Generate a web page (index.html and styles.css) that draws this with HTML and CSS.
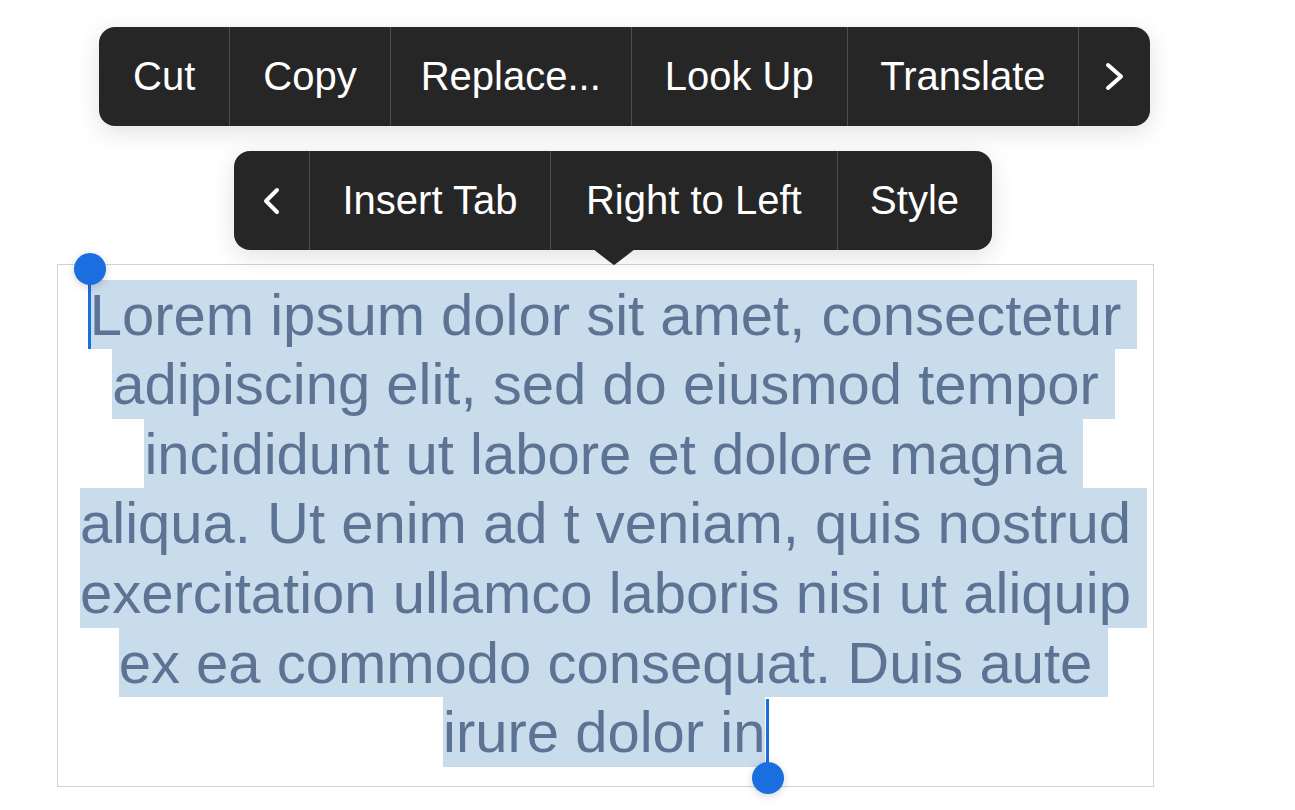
FILE: index.html
```html
<!DOCTYPE html>
<html>
<head>
<title>Text Selection Menu</title>
<link rel="stylesheet" href="styles.css">
</head>
<body>

<div class="stage">
  <div class="menu menu-main">
    <span class="item item-cut">Cut</span>
    <span class="item">Copy</span>
    <span class="item item-replace">Replace...</span>
    <span class="item">Look Up</span>
    <span class="item item-translate">Translate</span>
    <span class="item item-icon">
      <svg width="19" height="29" viewBox="0 0 19 29"><path d="M3 3 L16 14.5 L3 26" fill="none" stroke="#fff" stroke-width="4" stroke-linecap="round" stroke-linejoin="round"/></svg>
    </span>
  </div>

  <div class="menu menu-more">
    <span class="item item-icon item-back">
      <svg width="17" height="28" viewBox="0 0 17 28"><path d="M14 3 L3 14 L14 25" fill="none" stroke="#fff" stroke-width="4" stroke-linecap="round" stroke-linejoin="round"/></svg>
    </span>
    <span class="item item-tab">Insert Tab</span>
    <span class="item item-rtl">Right to Left</span>
    <span class="item item-style">Style</span>
  </div>

  <div class="textbox">
    <p class="text"><span class="caret caret-start"></span><span class="sel">Lorem ipsum dolor sit amet, consectetur adipiscing elit, sed do eiusmod tempor incididunt ut labore et dolore magna aliqua. Ut enim ad t veniam, quis nostrud exercitation ullamco laboris nisi ut aliquip ex ea commodo consequat. Duis aute irure dolor in</span><span class="caret caret-end"></span></p>
  </div>
</div>

</body>
</html>
```

FILE: styles.css
```css
body {
  margin: 0;
  background: #fff;
  font-family: "Liberation Sans", Arial, sans-serif;
}
.stage {
  display: flex;
  flex-direction: column;
  align-items: flex-start;
  min-height: 810px;
  box-sizing: border-box;
  padding-top: 27px;
}

/* edit menus */
.menu {
  display: flex;
  height: 99px;
  background: #262626;
  border-radius: 16px;
  box-shadow: 0 6px 24px rgba(0, 0, 0, 0.12);
  color: #fff;
  font-size: 40px;
}
.menu-main {
  margin-left: 99px;
}
.menu-more {
  position: relative;
  z-index: 2;
  margin-top: 25px;
  margin-left: 234px;
}
.menu-more::after {
  content: "";
  position: absolute;
  left: 359px;
  bottom: -15px;
  width: 42px;
  height: 16px;
  background: #262626;
  clip-path: polygon(0 0, 100% 0, 53% 96%, 50% 100%, 47% 96%);
}
.item {
  display: flex;
  align-items: center;
  padding: 0 33px;
  border-left: 1px solid #4d4d4d;
}
.item:first-child {
  border-left: none;
}
.item-cut {
  padding: 0 34px;
}
.item-replace {
  padding: 0 30px;
}
.item-translate {
  padding: 0 32.5px;
}
.item-tab {
  padding: 0 32.5px;
}
.item-rtl {
  padding: 0 35px;
}
.item-style {
  padding: 0 32.5px;
}
.menu .item-icon {
  padding: 0 26px;
}
.menu .item-back {
  padding: 0 29px;
}
.item-icon svg {
  display: block;
}

/* text field */
.textbox {
  margin-top: 14px;
  margin-left: 57px;
  width: 1097px;
  box-sizing: border-box;
  padding: 15px 8px 19px;
  border: 1px solid #d2d2d2;
}
.text {
  margin: 0;
  font-size: 58px;
  line-height: 69.6px;
  text-align: center;
  color: #5d7394;
  white-space: pre-wrap;
}
.sel {
  background: #c9dcec;
  padding: 2.4px 0;
}
.caret {
  position: relative;
  display: inline-block;
  vertical-align: top;
  width: 3px;
  height: 66px;
  margin: 3px -1.5px 0;
  background: #1a6ee0;
}
.caret::before {
  content: "";
  position: absolute;
  left: -14.5px;
  width: 32px;
  height: 32px;
  border-radius: 50%;
  background: #1a6ee0;
  box-shadow: 0 2px 8px rgba(0, 0, 0, 0.18);
}
.caret-start::before {
  top: -30px;
}
.caret-end {
  height: 77px;
  margin: 1px -1.5px -10px 1px;
}
.caret-end::before {
  top: 63px;
}
```
